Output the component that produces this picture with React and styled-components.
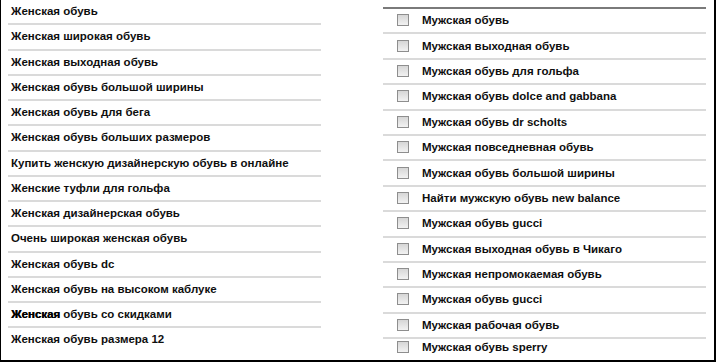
import React from "react";
import styled, { createGlobalStyle } from "styled-components";

const GlobalStyle = createGlobalStyle`
  html, body {
    margin: 0;
    padding: 0;
    background: #fff;
  }
  body {
    font-family: "Liberation Sans", Arial, sans-serif;
  }
`;

const womens = [
  "Женская обувь",
  "Женская широкая обувь",
  "Женская выходная обувь",
  "Женская обувь большой ширины",
  "Женская обувь для бега",
  "Женская обувь больших размеров",
  "Купить женскую дизайнерскую обувь в онлайне",
  "Женские туфли для гольфа",
  "Женская дизайнерская обувь",
  "Очень широкая женская обувь",
  "Женская обувь dc",
  "Женская обувь на высоком каблуке",
  "Женская обувь со скидками",
  "Женская обувь размера 12",
];

const mens = [
  "Мужская обувь",
  "Мужская выходная обувь",
  "Мужская обувь для гольфа",
  "Мужская обувь dolce and gabbana",
  "Мужская обувь dr scholts",
  "Мужская повседневная обувь",
  "Мужская обувь большой ширины",
  "Найти мужскую обувь new balance",
  "Мужская обувь gucci",
  "Мужская выходная обувь в Чикаго",
  "Мужская непромокаемая обувь",
  "Мужская обувь gucci",
  "Мужская рабочая обувь",
  "Мужская обувь sperry",
];

const Frame = styled.div`
  box-sizing: border-box;
  width: 716px;
  height: 362px;
  border-left: 1px solid #000;
  border-right: 2px solid #000;
  border-bottom: 2px solid #000;
  display: flex;
  overflow: hidden;
`;

const LeftColumn = styled.ul`
  list-style: none;
  margin: 0 0 0 7px;
  padding: 0;
  width: 313px;
`;

const RightColumn = styled.ul`
  list-style: none;
  margin: 7px 0 0 62px;
  padding: 0;
  width: 323px;
  border-top: 2px solid #7a7a7a;
  align-self: flex-start;
`;

const Row = styled.li`
  box-sizing: border-box;
  height: ${(p) => p.$h}px;
  display: flex;
  align-items: center;
  padding-left: ${(p) => (p.$check ? 14 : 3)}px;
  padding-bottom: 1px;
  border-bottom: 2px solid ${(p) => (p.$last ? "transparent" : "#dadada")};
  font-size: 11.5px;
  font-weight: 700;
  color: #0f0f0f;
  white-space: nowrap;
`;

const Box = styled.span`
  box-sizing: border-box;
  width: 12px;
  height: 12px;
  margin-right: 13px;
  border: 1px solid #8e8e8e;
  background: linear-gradient(#d6d6d6, #f2f2f2);
  flex-shrink: 0;
`;

const Heavy = styled.span`
  text-shadow: 0.4px 0 0 #000;
  color: #000;
`;

export default function App() {
  return (
    <>
      <GlobalStyle />
      <Frame>
        <LeftColumn>
          {womens.map((t, i) => (
            <Row key={i} $h={25.25} $last={i === womens.length - 1}>
              {i === 12 ? (
                <>
                  <Heavy>Женская</Heavy>&nbsp;обувь со скидками
                </>
              ) : (
                t
              )}
            </Row>
          ))}
        </LeftColumn>
        <RightColumn>
          {mens.map((t, i) => {
            const last = i === mens.length - 1;
            return (
              <Row key={i} $h={last ? 18 : 25.4} $check $last={last}>
                <Box />
                {t}
              </Row>
            );
          })}
        </RightColumn>
      </Frame>
    </>
  );
}
